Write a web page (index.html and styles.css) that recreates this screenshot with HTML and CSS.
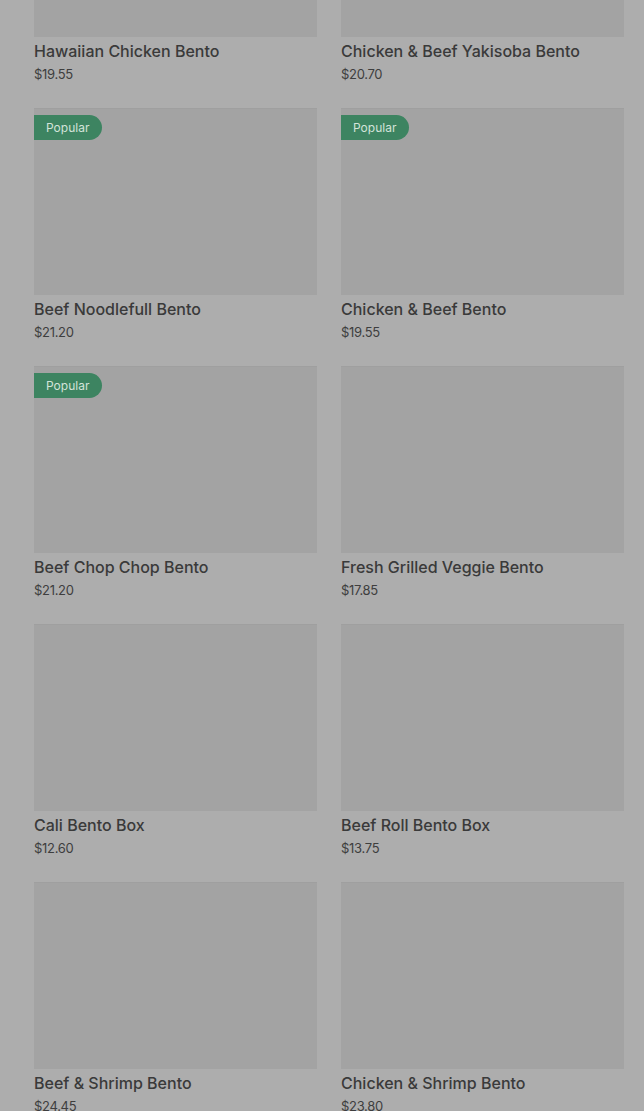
FILE: index.html
```html
<!DOCTYPE html>
<html>
<head>
<meta charset="utf-8">
<link rel="stylesheet" href="styles.css">
</head>
<body>
<div class="grid">
  <div class="card first"><div class="img"></div><div class="title">Hawaiian Chicken Bento</div><div class="price">$19.55</div></div>
  <div class="card first"><div class="img"></div><div class="title">Chicken &amp; Beef Yakisoba Bento</div><div class="price">$20.70</div></div>
  <div class="card"><div class="img"><span class="badge">Popular</span></div><div class="title">Beef Noodlefull Bento</div><div class="price">$21.20</div></div>
  <div class="card"><div class="img"><span class="badge">Popular</span></div><div class="title">Chicken &amp; Beef Bento</div><div class="price">$19.55</div></div>
  <div class="card"><div class="img"><span class="badge">Popular</span></div><div class="title">Beef Chop Chop Bento</div><div class="price">$21.20</div></div>
  <div class="card"><div class="img"></div><div class="title">Fresh Grilled Veggie Bento</div><div class="price">$17.85</div></div>
  <div class="card"><div class="img"></div><div class="title">Cali Bento Box</div><div class="price">$12.60</div></div>
  <div class="card"><div class="img"></div><div class="title">Beef Roll Bento Box</div><div class="price">$13.75</div></div>
  <div class="card"><div class="img"></div><div class="title">Beef &amp; Shrimp Bento</div><div class="price">$24.45</div></div>
  <div class="card"><div class="img"></div><div class="title">Chicken &amp; Shrimp Bento</div><div class="price">$23.80</div></div>
</div>
</body>
</html>
```
FILE: styles.css
```css
html, body {
  margin: 0;
  padding: 0;
  background: #adadad;
  height: 100%;
  overflow: hidden;
}
body {
  font-family: Inter, Roboto, "Liberation Sans", sans-serif;
}
.grid {
  display: grid;
  grid-template-columns: 283px 283px;
  column-gap: 24px;
  row-gap: 25px;
  padding: 0 20px 0 34px;
  margin-top: -150px;
}
.card {
  display: flex;
  flex-direction: column;
}
.img {
  position: relative;
  height: 187px;
  background: #a3a3a3;
  border-top: 1px solid #9f9f9f;
  box-sizing: border-box;
}
.badge {
  position: absolute;
  left: 0;
  top: 6px;
  height: 25px;
  line-height: 25px;
  padding: 0 13px 0 12px;
  background: #3d8461;
  color: #d3e3d9;
  font-size: 12px;
  border-radius: 0 13px 13px 0;
}
.title {
  margin-top: 4px;
  font-size: 16px;
  line-height: 20px;
  font-weight: 500;
  color: #3a3a3a;
}
.price {
  margin-top: 4px;
  font-size: 13px;
  line-height: 18px;
  color: #3e3e3e;
  letter-spacing: -0.3px;
}
```
